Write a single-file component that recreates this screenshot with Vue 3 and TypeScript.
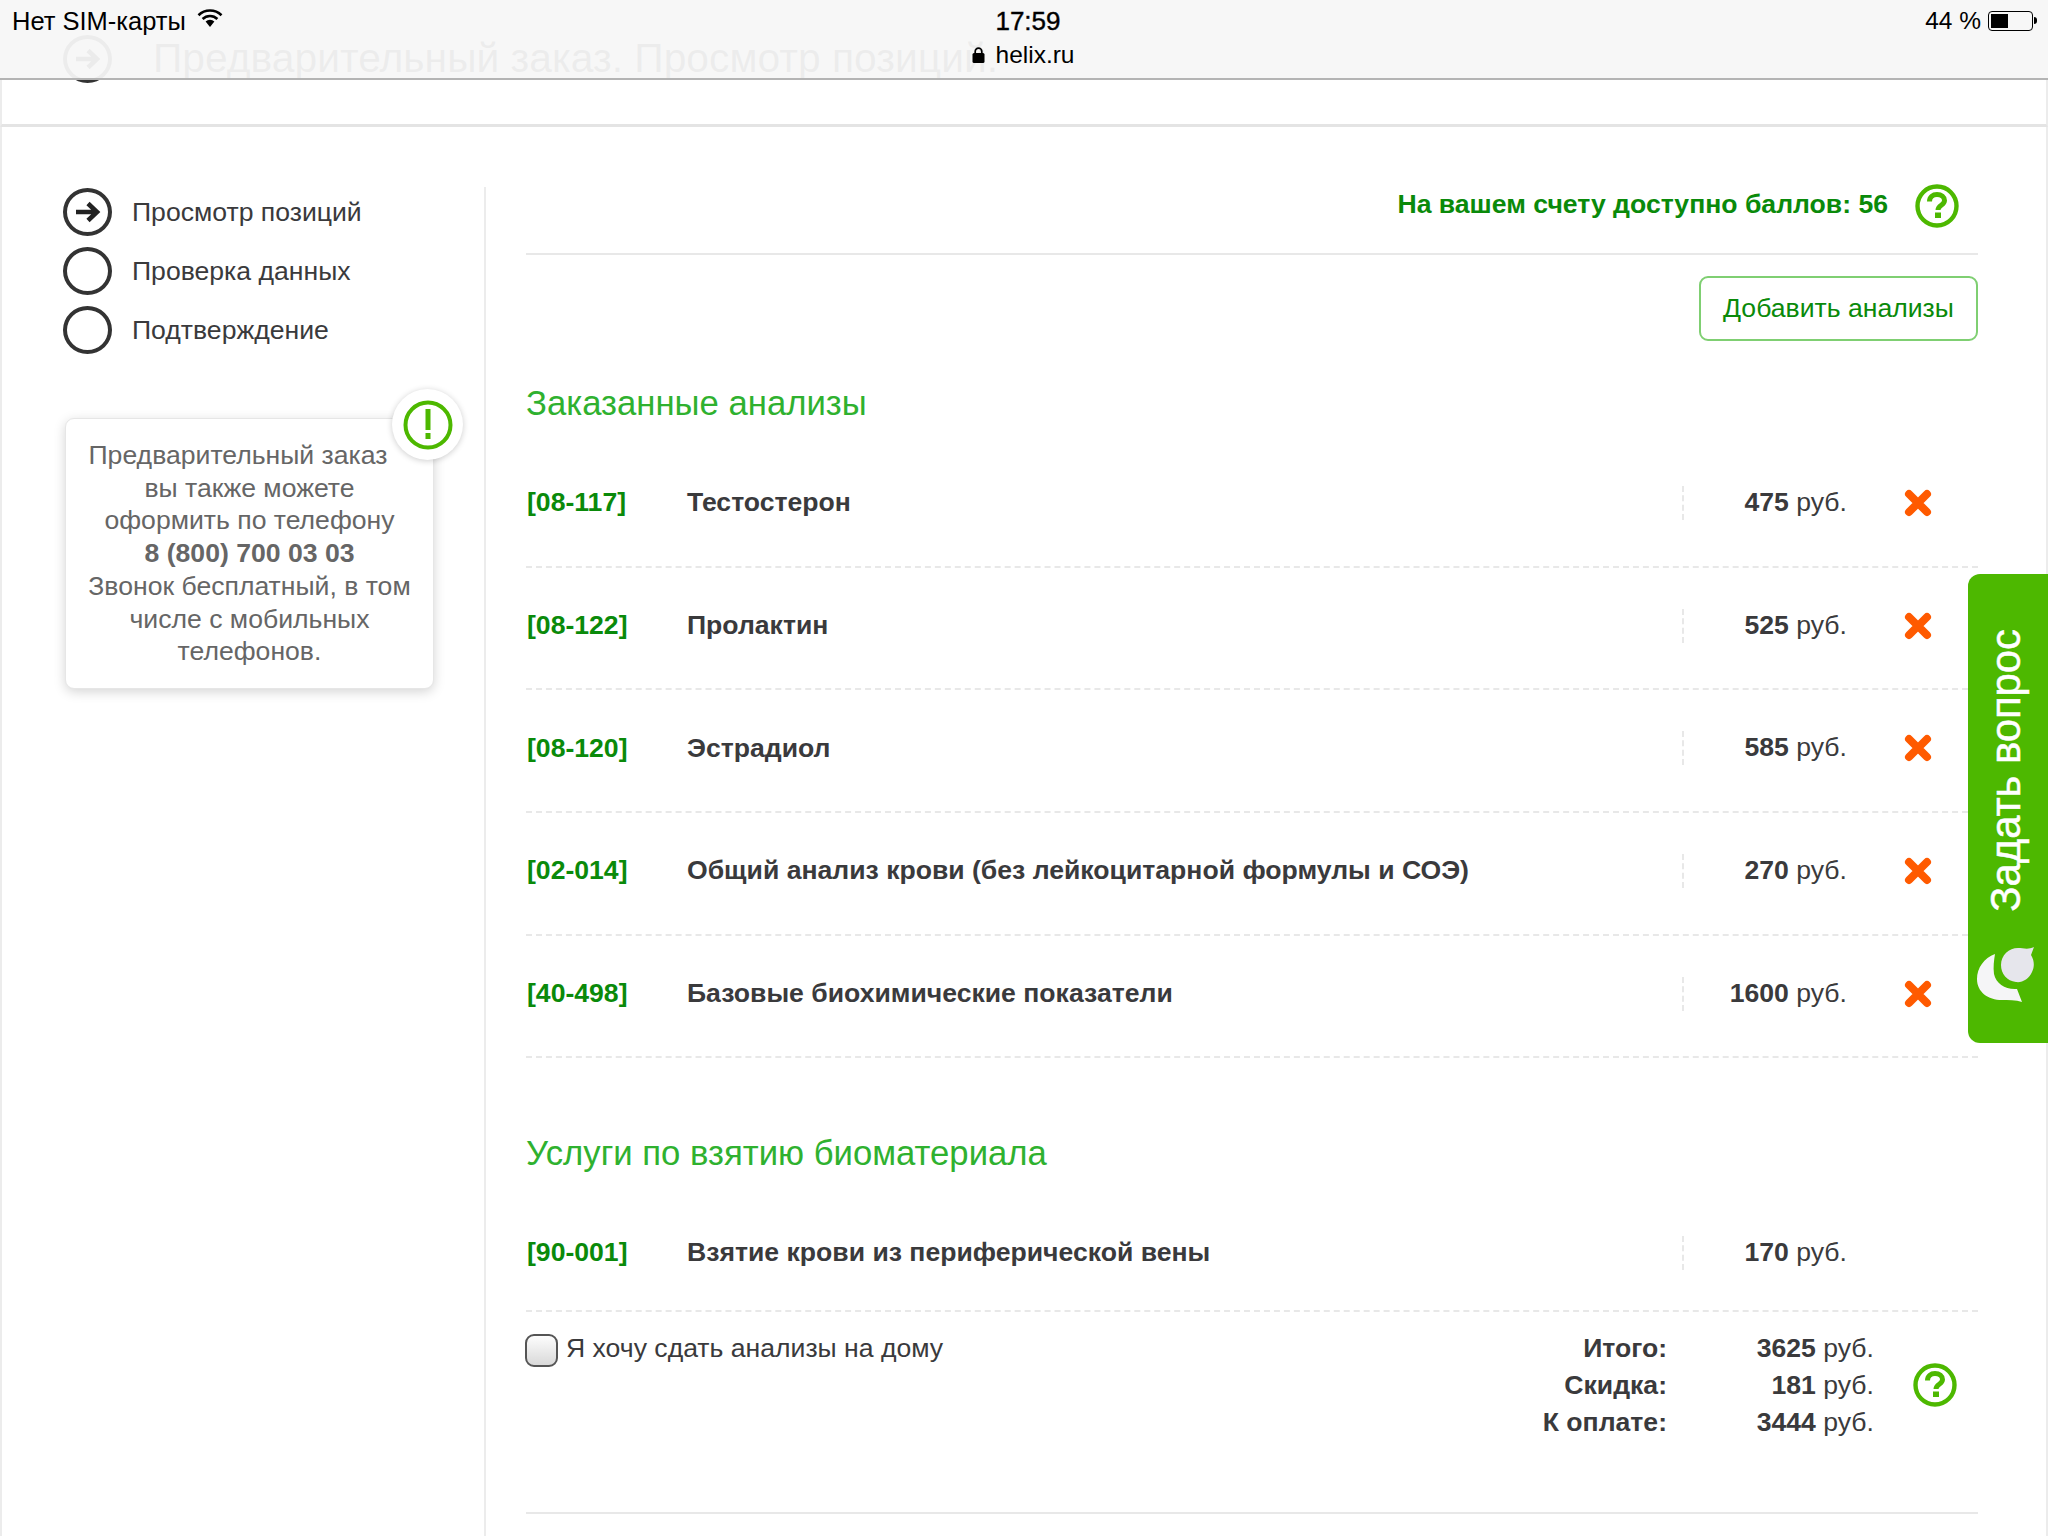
<script setup lang="ts">
interface Item { code: string; name: string; price: number }
const steps = ['Просмотр позиций', 'Проверка данных', 'Подтверждение']
const items: Item[] = [
  { code: '08-117', name: 'Тестостерон', price: 475 },
  { code: '08-122', name: 'Пролактин', price: 525 },
  { code: '08-120', name: 'Эстрадиол', price: 585 },
  { code: '02-014', name: 'Общий анализ крови (без лейкоцитарной формулы и СОЭ)', price: 270 },
  { code: '40-498', name: 'Базовые биохимические показатели', price: 1600 },
]
const totals = [
  { label: 'Итого:', value: 3625 },
  { label: 'Скидка:', value: 181 },
  { label: 'К оплате:', value: 3444 },
]
</script>

<template>
  <div class="page">
    <div class="ghost">
      <span class="circle ghost-circle">
        <svg width="30" height="24" viewBox="0 0 30 24">
          <path d="M3 12h21M15 3.500l9 8.500-9 8.500" fill="none" stroke="#222" stroke-width="4.600" />
        </svg>
      </span>
      <span class="ghost-title">Предварительный заказ. Просмотр позиций.</span>
    </div>

    <header class="status">
      <div class="status-left">
        <span>Нет SIM-карты</span>
        <svg class="wifi" width="26" height="20" viewBox="0 0 26 20">
          <path d="M1.500 7.200a16.500 16.500 0 0 1 23 0" fill="none" stroke="#000" stroke-width="2.600" />
          <path d="M5.600 11a10.600 10.600 0 0 1 14.800 0" fill="none" stroke="#000" stroke-width="2.600" />
          <path d="M8.600 13.600a6.400 6.400 0 0 1 8.800 0L13 19z" fill="#000" />
        </svg>
      </div>
      <div class="status-center">
        <span class="time">17:59</span>
        <span class="url">
          <svg width="13" height="16" viewBox="0 0 13 16">
            <rect x="0.500" y="6" width="12" height="10" rx="1.500" fill="#000" />
            <path d="M3.200 7V4.400a3.300 3.300 0 0 1 6.600 0V7" fill="none" stroke="#000" stroke-width="1.700" />
          </svg>
          helix.ru
        </span>
      </div>
      <div class="status-right">
        <span>44 %</span>
        <span class="battery"><span class="battery-fill"></span></span>
        <span class="battery-nub"></span>
      </div>
    </header>

    <div class="strip"></div>

    <div class="layout">
      <aside class="side">
        <ul class="steps">
          <li v-for="(step, i) in steps" :key="step" class="step">
            <span class="circle">
              <svg v-if="i === 0" width="30" height="24" viewBox="0 0 30 24">
                <path d="M3 12h21M15 3.500l9 8.500-9 8.500" fill="none" stroke="#222" stroke-width="4.600" />
              </svg>
            </span>
            <span>{{ step }}</span>
          </li>
        </ul>
        <div class="note">
          <span class="note-badge">
            <svg width="50" height="50" viewBox="0 0 50 50">
              <circle cx="25" cy="25" r="22.500" fill="none" stroke="#4db800" stroke-width="4" />
              <rect x="22.500" y="9" width="5" height="21" fill="#4db800" />
              <rect x="22.500" y="33" width="5" height="6" fill="#4db800" />
            </svg>
          </span>
          <p class="note-line first">Предварительный заказ</p>
          <p class="note-line">вы также можете</p>
          <p class="note-line">оформить по телефону</p>
          <p class="note-line"><b>8 (800) 700 03 03</b></p>
          <p class="note-line">Звонок бесплатный, в том</p>
          <p class="note-line">числе с мобильных</p>
          <p class="note-line">телефонов.</p>
        </div>
      </aside>

      <main class="main">
        <div class="points">
          <span class="points-text">На вашем счету доступно баллов: 56</span>
          <svg class="help" width="44" height="44" viewBox="0 0 44 44">
            <circle cx="22" cy="22" r="19.500" fill="none" stroke="#4db800" stroke-width="4.400" />
            <path d="M14.500 17.500c0-4.500 3.300-7 7.500-7 4.500 0 7.500 2.500 7.500 6 0 5-6.500 4.500-6.500 9.500" fill="none" stroke="#4db800" stroke-width="5" />
            <rect x="20" y="28.500" width="6" height="5.500" fill="#4db800" />
          </svg>
        </div>

        <button class="add" type="button">Добавить анализы</button>

        <h2 class="title">Заказанные анализы</h2>
        <div v-for="item in items" :key="item.code" class="row">
          <span class="code">[{{ item.code }}]</span>
          <span class="name">{{ item.name }}</span>
          <span class="price"><b>{{ item.price }}</b> руб.</span>
          <span class="remove">
            <svg width="28" height="28" viewBox="0 0 28 28">
              <path d="M5 5l18 18M23 5L5 23" fill="none" stroke="#ff5a00" stroke-width="8" stroke-linecap="round" />
            </svg>
          </span>
        </div>

        <h2 class="title second">Услуги по взятию биоматериала</h2>
        <div class="row service">
          <span class="code">[90-001]</span>
          <span class="name">Взятие крови из периферической вены</span>
          <span class="price"><b>170</b> руб.</span>
          <span class="remove"></span>
        </div>

        <div class="summary">
          <label class="home">
            <input class="check" type="checkbox" />
            <span>Я хочу сдать анализы на дому</span>
          </label>
          <div class="totals">
            <template v-for="t in totals" :key="t.label">
              <b class="total-label">{{ t.label }}</b>
              <span class="total-value"><b>{{ t.value }}</b> руб.</span>
            </template>
          </div>
          <svg class="help summary-help" width="44" height="44" viewBox="0 0 44 44">
            <circle cx="22" cy="22" r="19.500" fill="none" stroke="#4db800" stroke-width="4.400" />
            <path d="M14.500 17.500c0-4.500 3.300-7 7.500-7 4.500 0 7.500 2.500 7.500 6 0 5-6.500 4.500-6.500 9.500" fill="none" stroke="#4db800" stroke-width="5" />
            <rect x="20" y="28.500" width="6" height="5.500" fill="#4db800" />
          </svg>
        </div>
      </main>
    </div>

    <aside class="ask">
      <span class="ask-text">Задать вопрос</span>
      <svg class="ask-icon" width="62" height="60" viewBox="0 0 62 60">
        <path d="M21 8C10 12 3 22 3 33c0 13 11 21 25 21 6 0 14 0 20 2l-5-13c-11 1-21-5-23-15-1-7 0-14 1-20z" fill="#f5f5f7" />
        <path d="M27 19C27 9 35 2 44 2c5 0 10 2 16-1l-3 8c3 5 4 11 1 17-3 7-10 11-16 10-9-1-15-8-15-17z" fill="#e6e6ec" />
      </svg>
    </aside>
  </div>
</template>

<style scoped>
.page {
  position: relative;
  width: 2048px;
  height: 1536px;
  overflow: hidden;
  background: #fff;
  color: #3a3a3c;
  font-family: "Liberation Sans", Arial, sans-serif;
  font-size: 26.600px;
}
.ghost {
  position: absolute;
  z-index: 1;
  left: 63px;
  top: 35px;
  display: flex;
  align-items: flex-start;
  gap: 41px;
  color: #333;
}
.ghost-title {
  margin-top: 1px;
  font-size: 40.800px;
  line-height: 44px;
  white-space: nowrap;
}
.status {
  position: relative;
  z-index: 2;
  display: grid;
  grid-template-columns: 1fr auto 1fr;
  box-sizing: border-box;
  height: 80px;
  padding: 7px 11px 0 12px;
  background: rgba(247, 247, 247, 0.95);
  border-bottom: 2px solid #b4b4b4;
  color: #000;
  font-size: 25.500px;
  line-height: 28px;
}
.status-left {
  display: flex;
  align-items: flex-start;
  gap: 11px;
}
.wifi {
  margin-top: 1px;
}
.status-center {
  display: flex;
  flex-direction: column;
  align-items: center;
  gap: 6px;
  margin-left: -3px;
}
.time {
  margin-left: 10px;
  font-weight: 500;
  font-size: 26px;
  -webkit-text-stroke: 0.4px #000;
}
.url {
  display: flex;
  align-items: center;
  gap: 11px;
  font-size: 24.500px;
}
.status-right {
  display: flex;
  justify-content: flex-end;
  align-items: flex-start;
  font-size: 24.500px;
}
.battery {
  display: block;
  box-sizing: border-box;
  width: 45px;
  height: 20px;
  margin: 4px 0 0 7px;
  padding: 2px;
  border: 1px solid #000;
  border-radius: 4px;
}
.battery-fill {
  display: block;
  width: 17px;
  height: 100%;
  background: #000;
}
.battery-nub {
  width: 3px;
  height: 7px;
  margin: 10px 0 0 1px;
  background: #000;
  border-radius: 0 3px 3px 0;
}
.strip {
  box-sizing: border-box;
  height: 47px;
  background: #fff;
  border: 2px solid #ececec;
  border-width: 0 2px 3px;
  border-bottom-color: #e4e4e4;
}
.layout {
  display: flex;
  height: 1409px;
  box-sizing: border-box;
  border-left: 2px solid #ececec;
  border-right: 2px solid #ececec;
}
.side {
  flex: 0 0 482px;
  box-sizing: border-box;
  padding: 56px 0 0 61px;
}
.steps {
  list-style: none;
  margin: 0;
  padding: 0;
}
.step {
  display: flex;
  align-items: center;
  gap: 20px;
  height: 59px;
  line-height: 48px;
}
.step:first-child {
  height: 58px;
}
.circle {
  display: flex;
  flex: none;
  align-items: center;
  justify-content: center;
  box-sizing: border-box;
  width: 49px;
  height: 48px;
  border: 4px solid #333;
  border-radius: 50%;
}
.note {
  position: relative;
  box-sizing: border-box;
  width: 369px;
  height: 271px;
  margin: 59px 0 0 2px;
  padding: 20px 0 0;
  background: #fff;
  border: 1px solid #e6e6e6;
  border-radius: 9px;
  box-shadow: 0 3px 12px rgba(0, 0, 0, 0.17);
  color: #666;
  text-align: center;
}
.note-line {
  margin: 0;
  line-height: 32.700px;
}
.note-line.first {
  margin-right: 23px;
}
.note-badge {
  position: absolute;
  top: -30px;
  right: -30px;
  display: flex;
  align-items: center;
  justify-content: center;
  width: 71px;
  height: 71px;
  background: #fff;
  border-radius: 50%;
  box-shadow: 0 1px 6px rgba(0, 0, 0, 0.2);
}
.main {
  display: flex;
  flex-direction: column;
  flex: 1;
  box-sizing: border-box;
  margin-top: 60px;
  padding-left: 40px;
  padding-right: 68px;
  border-left: 2px solid #ececec;
}
.points {
  display: flex;
  align-items: center;
  justify-content: flex-end;
  flex: none;
  box-sizing: border-box;
  height: 72px;
  margin-top: -4px;
  padding: 0 19px 25px 0;
  border-bottom: 2px solid #e8e8e8;
}
.points-text {
  color: #0a8a0a;
  font-weight: 700;
  margin: 0 27px 2px 0;
}
.help {
  display: block;
  flex: none;
}
.add {
  align-self: flex-end;
  flex: none;
  box-sizing: border-box;
  width: 279px;
  height: 65px;
  margin-top: 21px;
  padding: 0;
  background: #fff;
  border: 2px solid #7fcf72;
  border-radius: 9px;
  color: #0a8a0a;
  font: inherit;
}
.title {
  flex: none;
  margin: 42px 0 22px;
  color: #2fb12f;
  font-size: 34.700px;
  font-weight: 400;
  line-height: 40px;
}
.title.second {
  margin-top: 75px;
}
.row {
  display: flex;
  align-items: center;
  flex: none;
  box-sizing: border-box;
  height: 122.700px;
  padding-bottom: 5px;
  border-bottom: 2px dashed #e8e8e8;
}
.row.service {
  height: 117px;
  padding-bottom: 0;
}
.code {
  flex: 0 0 160px;
  margin-left: 1px;
  color: #0a8a0a;
  font-weight: 700;
}
.name {
  flex: 0 0 995px;
  font-weight: 700;
}
.price {
  flex: 0 0 165px;
  box-sizing: border-box;
  height: 34px;
  line-height: 32px;
  border-left: 2px dashed #e8e8e8;
  text-align: right;
}
.remove {
  display: flex;
  align-items: center;
  padding-left: 57px;
}
.summary {
  display: flex;
  align-items: flex-start;
  flex: none;
  box-sizing: border-box;
  height: 202px;
  padding-top: 19px;
  border-bottom: 2px solid #e8e8e8;
}
.home {
  display: flex;
  align-items: center;
  gap: 8px;
  flex: 0 0 auto;
  margin-left: -1px;
  height: 35px;
}
.check {
  appearance: none;
  width: 33px;
  height: 33px;
  margin: 3px 0 0;
  box-sizing: border-box;
  border: 2px solid #555;
  border-radius: 9px;
  background: linear-gradient(#fdfdfd, #d9d9d9);
}
.totals {
  display: grid;
  grid-template-columns: max-content 207px;
  margin-left: auto;
  margin-right: 102px;
  line-height: 37px;
  margin-top: -1px;
}
.total-label {
  text-align: right;
}
.total-value {
  text-align: right;
}
.summary-help {
  position: relative;
  left: -21px;
  top: 32px;
  margin-left: -42px;
}
.ask {
  position: absolute;
  z-index: 3;
  top: 574px;
  right: 0;
  display: flex;
  flex-direction: column;
  align-items: center;
  box-sizing: border-box;
  width: 80px;
  height: 469px;
  padding-top: 55px;
  background: #4db800;
  border-radius: 12px 0 0 12px;
  color: #fff;
}
.ask-text {
  margin-left: -4px;
  writing-mode: vertical-rl;
  transform: rotate(180deg);
  font-size: 41.800px;
  line-height: 44px;
  white-space: nowrap;
  -webkit-text-stroke: 0.5px #fff;
}
.ask-icon {
  margin: 34px 0 0 -6px;
}
</style>
